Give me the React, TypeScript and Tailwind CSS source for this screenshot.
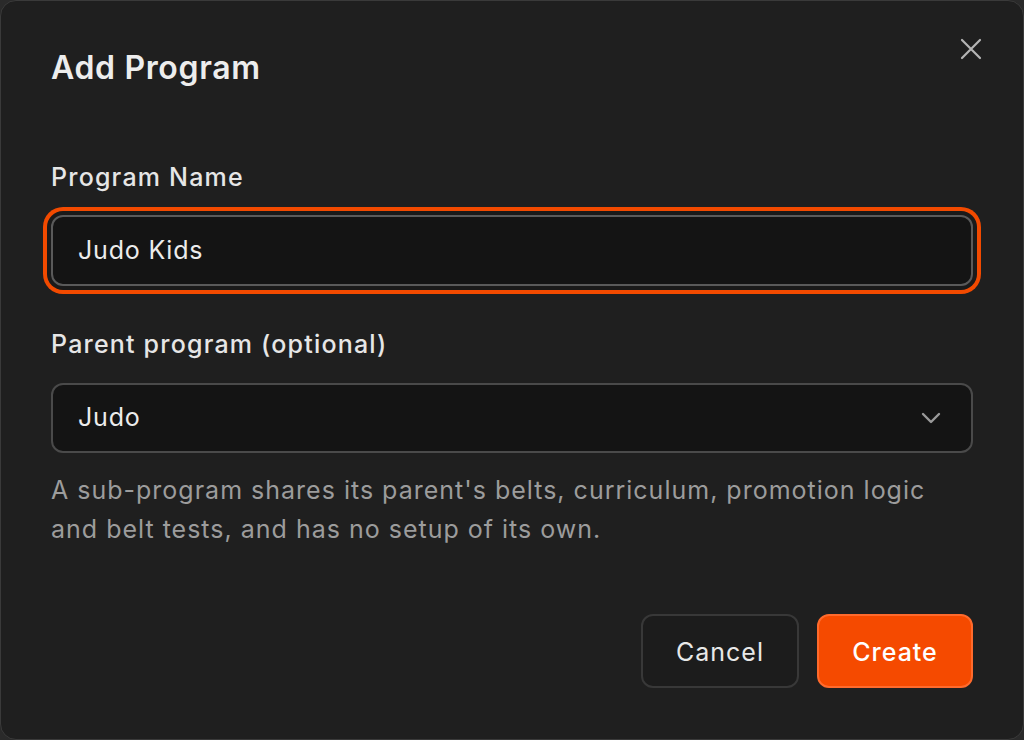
import React from "react";

export default function App() {
  return (
    <div
      className="w-[1024px] h-[740px] bg-[#2a2a2a] overflow-hidden"
      style={{ fontFamily: "Inter, 'Noto Sans', sans-serif" }}
    >
      <div className="relative w-full h-full rounded-[16px] border border-[#3a3a3a] bg-[#1f1f1f] flex flex-col px-[50px] pt-[47px] text-[#ececec]">
        <button className="absolute right-[40px] top-[36px] w-[24px] h-[24px] flex items-center justify-center text-[#b5b5b5]">
          <svg width="22" height="22" viewBox="0 0 22 22" fill="none" stroke="currentColor" strokeWidth="2.2" strokeLinecap="round">
            <path d="M2 2L20 20M20 2L2 20" />
          </svg>
        </button>
        <h1 className="text-[32px] leading-[40px] font-semibold tracking-[0.65px] text-[#ededed]">Add Program</h1>

        <label className="mt-[73px] text-[25px] leading-[32px] font-medium tracking-[1.2px] text-[#e6e6e6]">Program Name</label>
        <div className="mt-[22px] h-[71px] rounded-[12px] border-2 border-[#5a5a5a] bg-[#141414] flex items-center px-[25px] ring-4 ring-[#f24a00] ring-offset-[4px] ring-offset-[#1a1a1a]">
          <span className="text-[25px] tracking-[0.8px] text-[#ececec]">Judo Kids</span>
        </div>

        <label className="mt-[42px] text-[25px] leading-[32px] font-medium tracking-[1.2px] text-[#e6e6e6]">Parent program (optional)</label>
        <div className="mt-[23px] h-[70px] rounded-[12px] border-2 border-[#4a4a4a] bg-[#141414] flex items-center justify-between pl-[25px] pr-[30px]">
          <span className="text-[25px] tracking-[0.8px] text-[#ececec]">Judo</span>
          <svg width="20" height="12" viewBox="0 0 20 12" fill="none" stroke="#9a9a9a" strokeWidth="2.4" strokeLinecap="round" strokeLinejoin="round">
            <path d="M2 2L10 10L18 2" />
          </svg>
        </div>

        <p className="mt-[18px] text-[25px] leading-[39px] tracking-[1px] text-[#9c9c9c] whitespace-nowrap">
          A sub-program shares its parent's belts, curriculum, promotion logic
          <br />
          and belt tests, and has no setup of its own.
        </p>

        <div className="mt-[65px] flex justify-end gap-[18px]">
          <button className="w-[158px] h-[74px] pt-[3px] rounded-[12px] border-2 border-[#383838] bg-[#1c1c1c] text-[25px] tracking-[1px] text-[#e8e8e8]">
            Cancel
          </button>
          <button className="w-[156px] h-[74px] pt-[3px] rounded-[12px] border-2 border-[#ff6a2c] bg-[#f54a00] text-[25px] font-medium tracking-[1px] text-white">
            Create
          </button>
        </div>
      </div>
    </div>
  );
}
